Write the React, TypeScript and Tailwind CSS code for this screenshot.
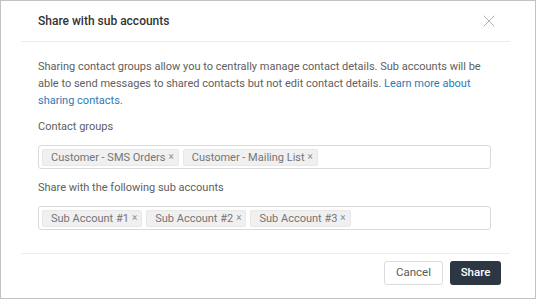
import { X } from 'lucide-react';

const GROUPS = ['Customer - SMS Orders', 'Customer - Mailing List'];
const ACCOUNTS = ['Sub Account #1', 'Sub Account #2', 'Sub Account #3'];

const Chip = ({ label }: { label: string }) => (
  <span className="flex items-center h-[17px] pl-[8px] pr-[4px] bg-[#f0f0f0] border border-[#e8e8e8] rounded-[2px] text-[11px] text-[#757575] leading-none">
    {label}
    <span className="ml-[3px] text-[10px] text-[#8f8f8f]">×</span>
  </span>
);

const TagInput = ({ items }: { items: string[] }) => (
  <div className="flex items-center gap-[4px] h-[24px] px-[3px] border border-[#dadada] rounded-[3px] bg-white">
    {items.map((item) => (
      <Chip key={item} label={item} />
    ))}
  </div>
);

export default function App() {
  return (
    <div className="w-[536px] h-[299px] bg-white border border-[#c2c2c2] font-['Roboto',sans-serif] flex flex-col">
      <div className="flex items-center justify-between h-[41px] ml-[20px] mr-[25px] pl-[17px] pr-[11px] border-b border-[#ececec]">
        <h2 className="text-[12px] font-medium text-[#333]">Share with sub accounts</h2>
        <X className="w-[20px] h-[20px] text-[#a6a6a6]" strokeWidth={1.1} />
      </div>

      <div className="ml-[37px] mr-[44px] pt-[16px] flex-1">
        <p className="text-[11px] leading-[17px] text-[#606060]">
          Sharing contact groups allow you to centrally manage contact details. Sub accounts will be able to send
          messages to shared contacts but not edit contact details.{' '}
          <a className="text-[#2b7bb9]">Learn more about sharing contacts.</a>
        </p>

        <div className="mt-[9px] text-[11px] leading-[17px] text-[#606060]">Contact groups</div>
        <div className="mt-[10px]">
          <TagInput items={GROUPS} />
        </div>

        <div className="mt-[10px] text-[11px] leading-[17px] text-[#606060]">Share with the following sub accounts</div>
        <div className="mt-[10px]">
          <TagInput items={ACCOUNTS} />
        </div>
      </div>

      <div className="flex justify-end gap-[7px] ml-[20px] mr-[25px] pt-[7px] pb-[13px] pr-[9px] border-t border-[#ececec]">
        <button className="h-[24px] w-[59px] border border-[#dcdcdc] rounded-[3px] bg-white text-[11.5px] text-[#5a5a5a]">
          Cancel
        </button>
        <button className="h-[24px] w-[51px] rounded-[3px] bg-[#2d3743] text-[11.5px] font-medium text-white">
          Share
        </button>
      </div>
    </div>
  );
}
